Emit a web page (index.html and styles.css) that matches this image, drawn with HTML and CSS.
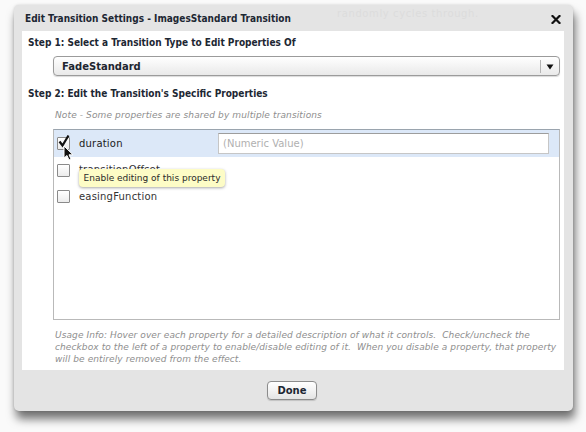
FILE: index.html
```html
<!DOCTYPE html>
<html>
<head>
<meta charset="utf-8">
<link rel="stylesheet" href="styles.css">
</head>
<body>
<div class="dialog">
  <div class="titlebar">
    <span class="title">Edit Transition Settings - ImagesStandard Transition</span>
    <span class="ghost">randomly cycles through.</span>
    <svg class="close" width="10" height="9" viewBox="0 0 10 9"><path d="M1.5 1 L8.5 8 M8.5 1 L1.5 8" stroke="#111" stroke-width="2.2" stroke-linecap="square"/></svg>
  </div>
  <div class="panel">
    <div class="step">Step 1: Select a Transition Type to Edit Properties Of</div>
    <div class="select">
      <span class="select-text">FadeStandard</span>
      <span class="select-btn"><svg width="8" height="6" viewBox="0 0 8 6"><path d="M0.5 0.5 L7.5 0.5 L4 5.5 Z" fill="#111"/></svg></span>
    </div>
    <div class="step step2">Step 2: Edit the Transition's Specific Properties</div>
    <div class="note">Note - Some properties are shared by multiple transitions</div>
    <div class="list">
      <div class="row selected">
        <span class="check">
          <svg class="tick" width="14" height="15" viewBox="0 0 14 15"><path d="M2.5 7.5 L5.5 11.5 L11.5 1.5" fill="none" stroke="#111" stroke-width="2.2"/></svg>
        </span>
        <span class="prop">duration</span>
        <span class="input">(Numeric Value)</span>
      </div>
      <div class="row">
        <span class="check"></span>
        <span class="prop prop-hidden">transitionOffset</span>
      </div>
      <div class="row">
        <span class="check"></span>
        <span class="prop">easingFunction</span>
      </div>
      <div class="tooltip">Enable editing of this property</div>
      <svg class="cursor" width="11" height="16" viewBox="0 0 11 16"><path d="M1 1 L1 13 L4 10.5 L6 15 L8 14 L6 9.8 L10 9.8 Z" fill="#111" stroke="#fff" stroke-width="1"/></svg>
    </div>
    <div class="usage">Usage Info: Hover over each property for a detailed description of what it controls.&nbsp; Check/uncheck the checkbox to the left of a property to enable/disable editing of it.&nbsp; When you disable a property, that property will be entirely removed from the effect.</div>
  </div>
  <div class="footer">
    <button class="done">Done</button>
  </div>
</div>
</body>
</html>
```
FILE: styles.css
```css
html, body {
  margin: 0;
  padding: 0;
}
body {
  width: 586px;
  height: 432px;
  background: #fafafa;
  font-family: "DejaVu Sans", Verdana, sans-serif;
  overflow: hidden;
}
.dialog {
  margin: 5px 0 0 14px;
  width: 559px;
  height: 406px;
  background: #e4e4e4;
  border-radius: 5px;
  box-shadow: 2px 8px 10px rgba(0, 0, 0, 0.55), 0 0 3px rgba(0, 0, 0, 0.15);
  display: flex;
  flex-direction: column;
}
.titlebar {
  height: 26px;
  display: flex;
  align-items: center;
  padding: 0 12px 0 11px;
  position: relative;
}
.title {
  font-family: "DejaVu Sans Condensed", "DejaVu Sans", sans-serif;
  font-weight: bold;
  font-size: 10px;
  color: #1d2733;
  white-space: nowrap;
}
.ghost {
  position: absolute;
  left: 323px;
  top: 3px;
  font-size: 10px;
  color: #dcdcdc;
  letter-spacing: 0.6px;
}
.close {
  margin-left: auto;
  margin-top: 2px;
}
.panel {
  height: 339px;
  margin: 0 9px 0 8px;
  background: #fff;
  display: flex;
  flex-direction: column;
  padding: 6px 4px 0 6px;
  box-sizing: border-box;
}
.step {
  font-family: "DejaVu Sans Condensed", "DejaVu Sans", sans-serif;
  font-weight: bold;
  font-size: 10px;
  line-height: 12px;
  height: 12px;
  color: #1d2733;
  white-space: nowrap;
}
.step2 {
  margin-top: 12px;
}
.select {
  margin: 7px 0 0 25px;
  height: 20px;
  box-sizing: border-box;
  border: 1px solid #9b9b9b;
  border-radius: 4px;
  background: linear-gradient(#ffffff, #f4f4f4 50%, #e9e9e9);
  box-shadow: 0 1px 1px rgba(0, 0, 0, 0.15);
  display: flex;
  align-items: center;
}
.select-text {
  padding-left: 8px;
  font-weight: bold;
  font-size: 10px;
  color: #1e2630;
  flex: 1;
}
.select-btn {
  width: 18px;
  height: 12px;
  border-left: 1px solid #b5b5b5;
  display: flex;
  align-items: center;
  justify-content: center;
  padding-top: 1px;
}
.note {
  margin: 9px 0 0 27px;
  font-size: 9px;
  line-height: 12px;
  font-style: italic;
  color: #8e8e8e;
  letter-spacing: 0.12px;
  white-space: nowrap;
}
.list {
  margin: 8px 0 0 25px;
  height: 191px;
  box-sizing: border-box;
  border: 1px solid #b9b9b9;
  border-top-color: #9aa4ae;
  position: relative;
  display: flex;
  flex-direction: column;
}
.row {
  height: 26px;
  display: flex;
  align-items: center;
  padding-left: 3px;
}
.row.selected {
  height: 27px;
  background: #dce8f8;
}
.check {
  width: 13px;
  height: 13px;
  box-sizing: border-box;
  border: 1px solid #8a8a8a;
  border-radius: 1px;
  background: linear-gradient(#ffffff, #ececec);
  position: relative;
  flex: none;
}
.tick {
  position: absolute;
  left: -1px;
  top: -4px;
}
.prop {
  margin-left: 9px;
  font-size: 10px;
  color: #333;
  letter-spacing: 0.2px;
  width: 130px;
}
.prop-hidden {
  margin-top: -2px;
}
.row.selected .prop {
  color: #1a1a1a;
}
.input {
  margin-left: 9px;
  width: 331px;
  height: 21px;
  box-sizing: border-box;
  border: 1px solid #c6c6c6;
  border-top-color: #9d9d9d;
  background: #fff;
  font-size: 10px;
  color: #b0b0b0;
  padding-left: 4px;
  display: flex;
  align-items: center;
}
.tooltip {
  position: absolute;
  left: 25px;
  top: 39px;
  width: 146px;
  height: 18px;
  box-sizing: border-box;
  background: #fdfcc6;
  border-radius: 4px;
  box-shadow: 0 1px 3px rgba(0, 0, 0, 0.35);
  font-size: 9px;
  color: #2a2a2a;
  display: flex;
  align-items: center;
  justify-content: center;
  white-space: nowrap;
}
.cursor {
  position: absolute;
  left: 9px;
  top: 15px;
}
.usage {
  margin: 9px -3px 0 27px;
  font-size: 9px;
  line-height: 12px;
  font-style: italic;
  color: #8e8e8e;
  letter-spacing: 0.1px;
}
.footer {
  flex: 1;
  display: flex;
  justify-content: center;
  padding-top: 11px;
  padding-right: 3px;
}
.done {
  width: 50px;
  height: 19px;
  border: 1px solid #8c8c8c;
  border-radius: 4px;
  background: linear-gradient(#ffffff, #f3f3f3 50%, #e4e4e4);
  box-shadow: 0 1px 1px rgba(0, 0, 0, 0.15);
  font-family: "DejaVu Sans", sans-serif;
  font-weight: bold;
  font-size: 10px;
  color: #1d2733;
  padding: 0;
  cursor: default;
}
```
